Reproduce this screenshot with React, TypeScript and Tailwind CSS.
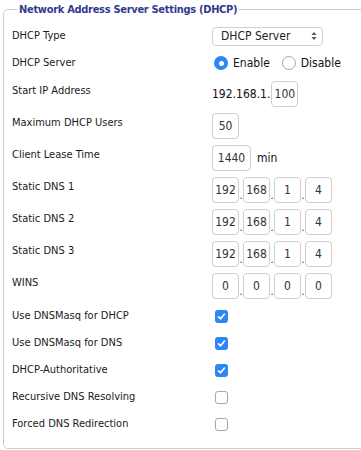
import React from "react";

const font = { fontFamily: "Tahoma, 'DejaVu Sans Condensed', 'DejaVu Sans', sans-serif" };

function Box({ value, w = "w-[27px]" }: { value: string; w?: string }) {
  return (
    <div
      className={`${w} h-[26px] rounded-[4px] border border-[#cfcfcf] bg-white flex items-center justify-center text-[12px] text-[#333]`}
    >
      {value}
    </div>
  );
}

function IpBoxes({ parts }: { parts: string[] }) {
  return (
    <div className="flex items-end">
      {parts.map((p, i) => (
        <React.Fragment key={i}>
          {i > 0 && <span className="w-[4px] text-center text-[11px] leading-[14px] text-[#333]">.</span>}
          <Box value={p} />
        </React.Fragment>
      ))}
    </div>
  );
}

function Check({ on }: { on: boolean }) {
  if (!on) {
    return <div className="w-[13px] h-[13px] rounded-[3px] border border-[#a8a8a8] bg-white" />;
  }
  return (
    <div className="w-[13px] h-[13px] rounded-[3px] bg-[#2b87f6] flex items-center justify-center">
      <svg width="9" height="9" viewBox="0 0 9 9">
        <path d="M1.5 4.8 L3.6 6.8 L7.5 2" fill="none" stroke="white" strokeWidth="1.6" strokeLinecap="round" strokeLinejoin="round" />
      </svg>
    </div>
  );
}

function Radio({ on }: { on: boolean }) {
  if (on) {
    return (
      <div className="w-[14px] h-[14px] rounded-full bg-[#2b87f6] flex items-center justify-center">
        <div className="w-[5px] h-[5px] rounded-full bg-white" />
      </div>
    );
  }
  return <div className="w-[14px] h-[14px] rounded-full border border-[#a8a8a8] bg-white" />;
}

function Row({ label, className, children }: { label: string; className: string; children: React.ReactNode }) {
  return (
    <div className={`flex ${className}`}>
      <div className="w-[200px] shrink-0 text-[11px] leading-[20px] text-[#1a1a1a]">{label}</div>
      <div className="flex items-center">{children}</div>
    </div>
  );
}

export default function App() {
  const checks: [string, boolean][] = [
    ["Use DNSMasq for DHCP", true],
    ["Use DNSMasq for DNS", true],
    ["DHCP-Authoritative", true],
    ["Recursive DNS Resolving", false],
    ["Forced DNS Redirection", false],
  ];

  return (
    <div className="w-[361px] h-[450px] overflow-hidden bg-white" style={font}>
      <fieldset className="ml-[3px] w-[400px] rounded-[5px] border border-[#cccccc] pl-[8px] pb-[14px]">
        <legend className="ml-[5px] px-[2px] text-[11px] tracking-[-0.3px] leading-[19px] font-bold text-[#333a8c]">
          Network Address Server Settings (DHCP)
        </legend>

        <Row label="DHCP Type" className="mt-[7px] h-[20px] items-center">
          <div className="w-[111px] h-[19px] rounded-[4px] border border-[#cfcfcf] bg-white flex items-center justify-between pl-[8px] pr-[5px] text-[12px] text-[#222]">
            <span>DHCP Server</span>
            <svg width="6" height="10" viewBox="0 0 6 10">
              <path d="M3 1 L5.5 4 L0.5 4 Z" fill="#555" />
              <path d="M3 9 L5.5 6 L0.5 6 Z" fill="#555" />
            </svg>
          </div>
        </Row>

        <Row label="DHCP Server" className="mt-[7px] h-[20px] items-center">
          <div className="flex items-center gap-[5px] ml-[2px] text-[12px] text-[#111]">
            <Radio on />
            <span>Enable</span>
            <span className="w-[2px]" />
            <Radio on={false} />
            <span>Disable</span>
          </div>
        </Row>

        <Row label="Start IP Address" className="mt-[8px] h-[26px] items-start">
          <span className="text-[12px] text-[#111] mr-[1px]">192.168.1.</span>
          <Box value="100" />
        </Row>

        <Row label="Maximum DHCP Users" className="mt-[6px] h-[26px] items-start">
          <Box value="50" />
        </Row>

        <Row label="Client Lease Time" className="mt-[6px] h-[26px] items-start">
          <Box value="1440" w="w-[39px]" />
          <span className="ml-[6px] text-[12px] text-[#111]">min</span>
        </Row>

        <Row label="Static DNS 1" className="mt-[6px] h-[26px] items-start">
          <IpBoxes parts={["192", "168", "1", "4"]} />
        </Row>
        <Row label="Static DNS 2" className="mt-[6px] h-[26px] items-start">
          <IpBoxes parts={["192", "168", "1", "4"]} />
        </Row>
        <Row label="Static DNS 3" className="mt-[6px] h-[26px] items-start">
          <IpBoxes parts={["192", "168", "1", "4"]} />
        </Row>
        <Row label="WINS" className="mt-[6px] h-[26px] items-start">
          <IpBoxes parts={["0", "0", "0", "0"]} />
        </Row>

        {checks.map(([label, on]) => (
          <Row key={label} label={label} className="mt-[7px] h-[20px] items-center">
            <div className="ml-[3px]">
              <Check on={on} />
            </div>
          </Row>
        ))}
      </fieldset>
    </div>
  );
}
